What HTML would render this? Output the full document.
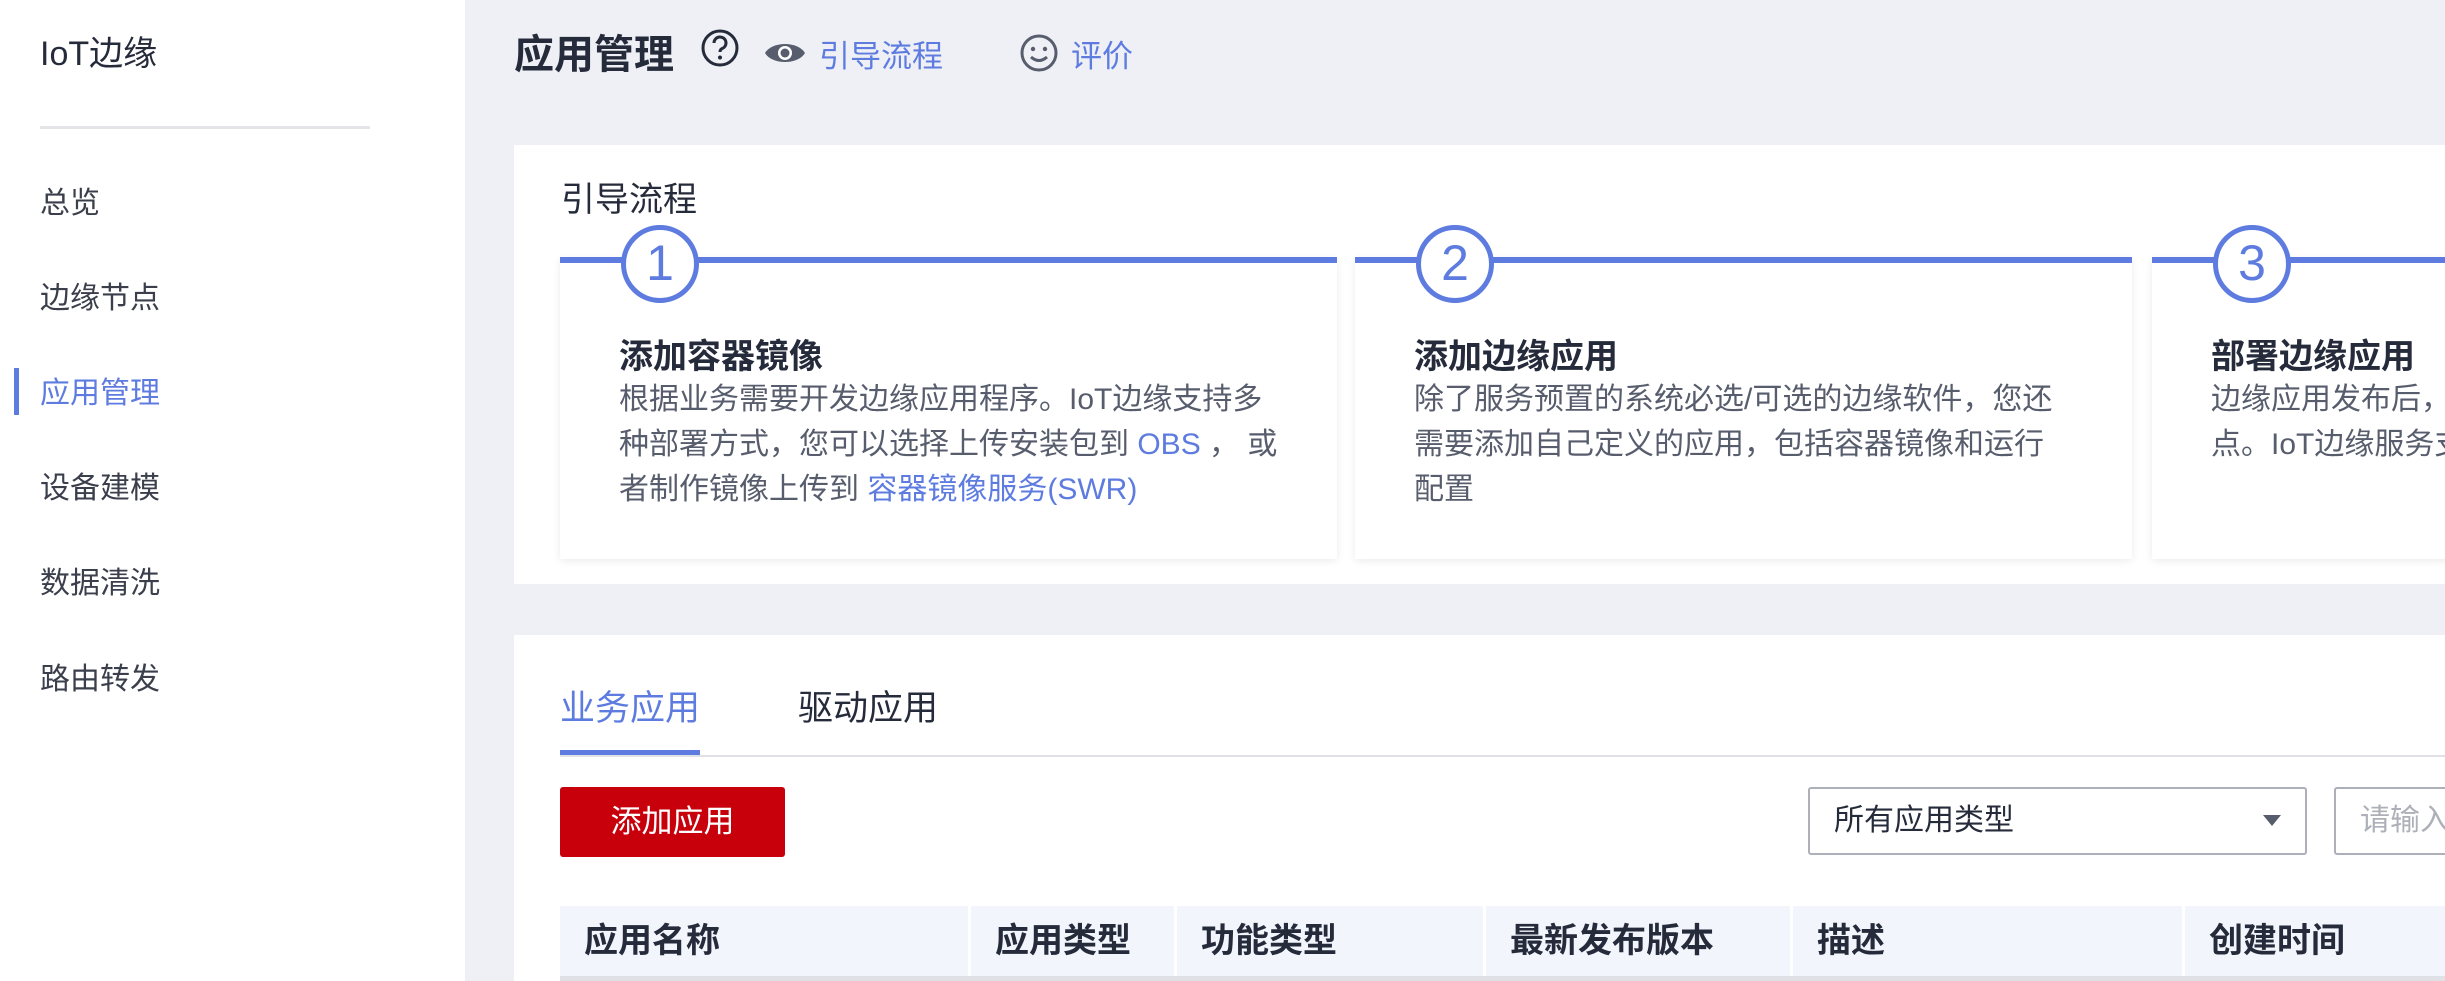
<!DOCTYPE html>
<html><head><meta charset="utf-8"><style>
*{margin:0;padding:0;box-sizing:border-box}
html,body{width:2445px;height:981px;overflow:hidden}
body{background:#eef0f5;font-family:"Liberation Sans","Noto Sans CJK SC",sans-serif;color:#252b3a;position:relative}
#wrap{position:absolute;left:0;top:0;width:2445px;height:981px;overflow:hidden}
.abs{position:absolute;white-space:nowrap}
#side{position:absolute;left:0;top:0;width:465px;height:981px;background:#fff}
.nav{position:absolute;left:40px;font-size:30px;color:#3a3f4b;line-height:40px}
.blue{color:#5e7ce0}
.card{position:absolute;top:257px;width:777px;height:302px;background:#fff;box-shadow:0 2px 8px rgba(0,0,0,.08);border-top:6px solid #5e7ce0}
.circ{position:absolute;top:-38px;left:61px;width:78px;height:78px;border:5px solid #5e7ce0;border-radius:50%;background:#fff;color:#5e7ce0;font-size:50px;text-align:center;line-height:66px}
.ct{position:absolute;left:59px;top:66px;font-size:34px;font-weight:bold;color:#252b3a;white-space:nowrap}
.cb{position:absolute;left:59px;top:114px;font-size:30px;line-height:45px;color:#575d6c;width:760px;white-space:nowrap}
.th{position:absolute;top:906px;height:70px;background:#f2f5fc;font-size:34px;font-weight:bold;line-height:70px;padding-left:24px;color:#252b3a;white-space:nowrap;overflow:hidden}
</style></head><body><div id="wrap">
<div id="side">
<div class="abs" style="left:40px;top:26px;font-size:34px;color:#252b3a">IoT边缘</div>
<div class="abs" style="left:40px;top:126px;width:330px;height:3px;background:#e4e5e9"></div>
<div class="nav" style="top:184px">总览</div>
<div class="nav" style="top:279px">边缘节点</div>
<div class="abs" style="left:14px;top:368px;width:5px;height:47px;background:#5e7ce0"></div>
<div class="nav blue" style="top:374px">应用管理</div>
<div class="nav" style="top:469px">设备建模</div>
<div class="nav" style="top:564px">数据清洗</div>
<div class="nav" style="top:660px">路由转发</div>
</div>
<div class="abs" style="left:514px;top:22px;font-size:40px;font-weight:bold;color:#252b3a">应用管理</div>
<svg class="abs" style="left:700px;top:28px" width="40" height="40" viewBox="0 0 40 40"><circle cx="20" cy="20" r="17" fill="none" stroke="#252b3a" stroke-width="3"/><path d="M14 15a6 6 0 1 1 8 5.6c-1.5.7-2 1.6-2 3.4" fill="none" stroke="#252b3a" stroke-width="3"/><circle cx="20" cy="29.5" r="2" fill="#252b3a"/></svg>
<svg class="abs" style="left:764px;top:38px" width="42" height="30" viewBox="0 0 42 30"><path d="M1 15C8 3 34 3 41 15C34 27 8 27 1 15Z" fill="#575d6c"/><circle cx="21" cy="15" r="7" fill="#fff"/><circle cx="21" cy="15" r="4.5" fill="#575d6c"/></svg>
<div class="abs blue" style="left:819px;top:31px;font-size:31px">引导流程</div>
<svg class="abs" style="left:1019px;top:33px" width="40" height="40" viewBox="0 0 40 40"><circle cx="20" cy="20" r="17" fill="none" stroke="#575d6c" stroke-width="3"/><circle cx="14" cy="16" r="2.2" fill="#575d6c"/><circle cx="26" cy="16" r="2.2" fill="#575d6c"/><path d="M12 24q8 7 16 0" fill="none" stroke="#575d6c" stroke-width="3"/></svg>
<div class="abs blue" style="left:1071px;top:31px;font-size:31px">评价</div>

<div class="abs" style="left:514px;top:145px;width:1931px;height:439px;background:#fff"></div>
<div class="abs" style="left:561px;top:172px;font-size:34px;color:#252b3a">引导流程</div>
<div class="card" style="left:560px"><div class="circ">1</div><div class="ct">添加容器镜像</div><div class="cb">根据业务需要开发边缘应用程序。IoT边缘支持多<br>种部署方式，您可以选择上传安装包到 <span class="blue">OBS</span> ， 或<br>者制作镜像上传到 <span class="blue">容器镜像服务(SWR)</span></div></div>
<div class="card" style="left:1355px"><div class="circ">2</div><div class="ct">添加边缘应用</div><div class="cb">除了服务预置的系统必选/可选的边缘软件，您还<br>需要添加自己定义的应用，包括容器镜像和运行<br>配置</div></div>
<div class="card" style="left:2152px;width:320px"><div class="circ">3</div><div class="ct">部署边缘应用</div><div class="cb">边缘应用发布后，将应用部署到边缘节<br>点。IoT边缘服务支持</div></div>

<div class="abs" style="left:514px;top:635px;width:1931px;height:346px;background:#fff"></div>
<div class="abs blue" style="left:560px;top:680px;font-size:35px">业务应用</div>
<div class="abs" style="left:798px;top:680px;font-size:35px;color:#252b3a">驱动应用</div>
<div class="abs" style="left:560px;top:755px;width:1885px;height:2px;background:#dfe1e6"></div>
<div class="abs" style="left:560px;top:750px;width:140px;height:5px;background:#5e7ce0"></div>
<div class="abs" style="left:560px;top:787px;width:225px;height:70px;background:#c7000b;border-radius:3px;color:#fff;font-size:31px;text-align:center;line-height:70px">添加应用</div>
<div class="abs" style="left:1808px;top:787px;width:499px;height:68px;border:2px solid #adb0b8;border-radius:3px;font-size:30px;line-height:64px;padding-left:24px;color:#252b3a">所有应用类型</div>
<div class="abs" style="left:2263px;top:815px;width:0;height:0;border-left:9px solid transparent;border-right:9px solid transparent;border-top:11px solid #575d6c"></div>
<div class="abs" style="left:2334px;top:787px;width:200px;height:68px;border:2px solid #adb0b8;border-radius:3px;font-size:30px;line-height:64px;padding-left:24px;color:#adb0b8">请输入</div>

<div class="th" style="left:560px;width:408px">应用名称</div>
<div class="th" style="left:971px;width:203px">应用类型</div>
<div class="th" style="left:1177px;width:306px">功能类型</div>
<div class="th" style="left:1486px;width:304px">最新发布版本</div>
<div class="th" style="left:1793px;width:389px">描述</div>
<div class="th" style="left:2185px;width:260px">创建时间</div>
<div class="abs" style="left:560px;top:976px;width:1885px;height:5px;background:#dfe1e6"></div>
</div></body></html>
